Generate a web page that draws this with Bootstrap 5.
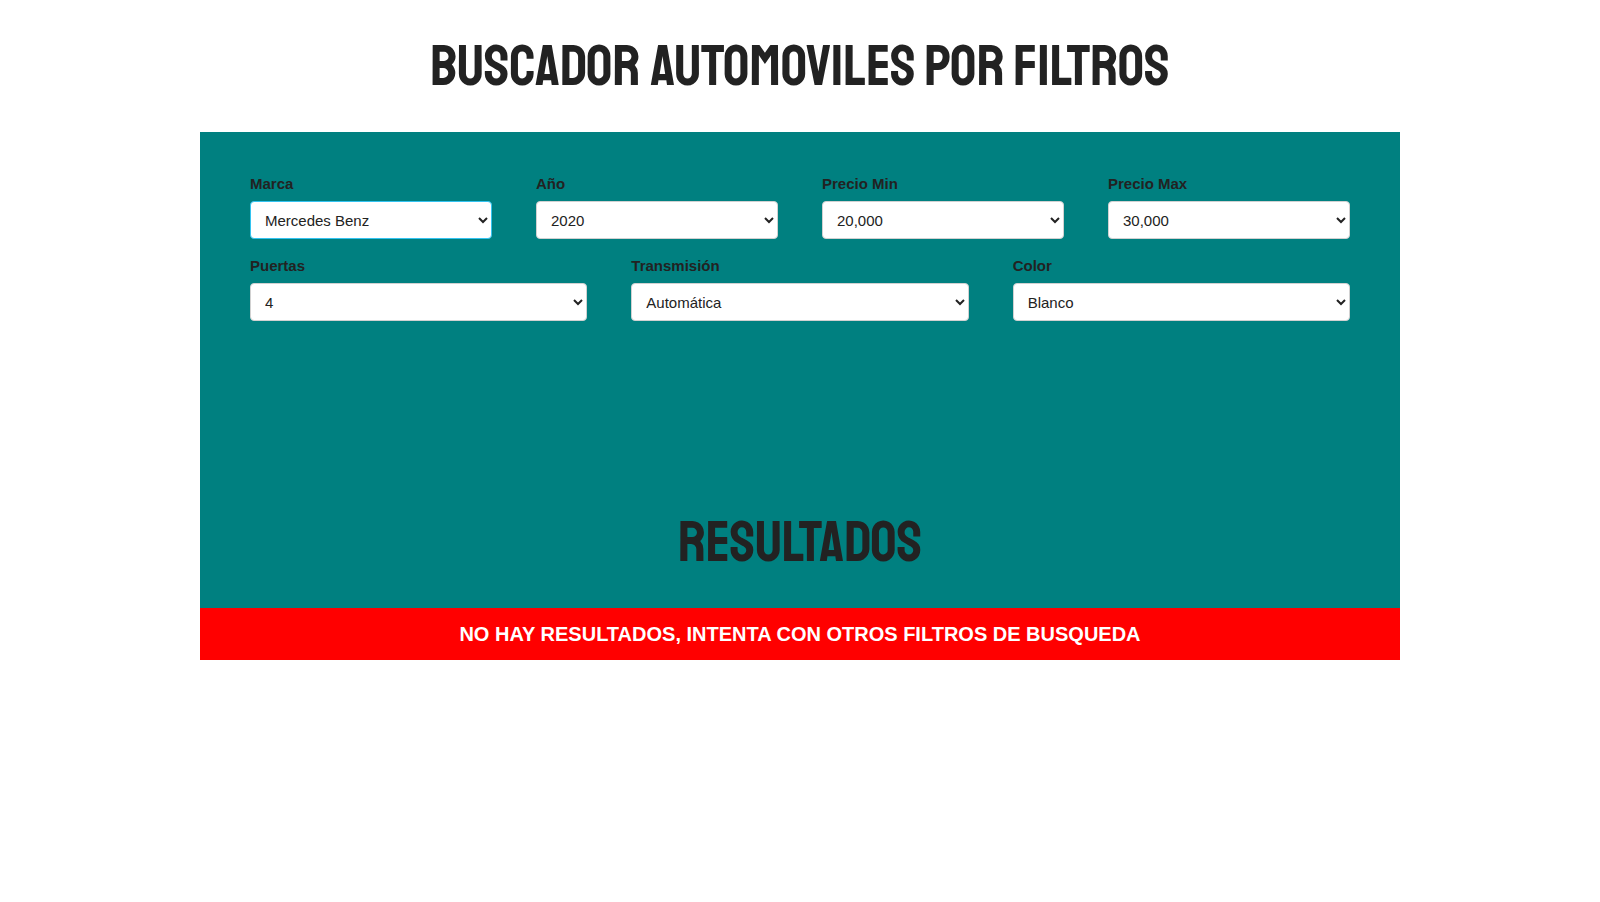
<!DOCTYPE html>
<html lang="es">
<head>
<meta charset="utf-8">
<meta name="viewport" content="width=device-width, initial-scale=1">
<title>Buscador Automoviles por Filtros</title>
<link href="https://cdn.jsdelivr.net/npm/bootstrap@5.3.0/dist/css/bootstrap.min.css" rel="stylesheet">
<style>
  body { font-family: "Liberation Sans", Arial, sans-serif; font-size: 15px; line-height: 24px; color: #222; background: #fff; }
  .page-wrap { max-width: 1200px; }
  .display-title { font-family: "Staatliches", "Noto Sans CJK JP", sans-serif; font-size: 58px; line-height: 72px; font-weight: 400; margin: 30px 0; color: #222; }
  .search-panel { background: #008080; }
  .filters { padding: 40px 50px; margin-bottom: 130px; }
  .filters .row { --bs-gutter-x: 44px; }
  .filters label { display: block; font-weight: 600; margin-bottom: 5px; }
  .filters .form-select {
    appearance: auto; background: #fff; height: 38px; padding: 6px 10px; margin-bottom: 15px;
    border: 1px solid #d1d1d1; border-radius: 4px; font-size: 15px; line-height: 24px; color: #222; box-shadow: none;
  }
  .filters .form-select.is-current, .filters .form-select:focus { border-color: #33c3f0; }
  .no-results { background: #f00; font-size: 20px; line-height: 32px; padding: 10px; }
</style>
</head>
<body>
<div class="container-fluid page-wrap p-0 overflow-hidden">
  <h1 class="display-title text-center text-uppercase">Buscador Automoviles por Filtros</h1>
  <main class="search-panel">
    <form class="filters">
      <div class="row">
        <div class="col-12 col-md-3">
          <label for="marca">Marca</label>
          <select class="form-select is-current" id="marca"><option>Mercedes Benz</option></select>
        </div>
        <div class="col-12 col-md-3">
          <label for="year">Año</label>
          <select class="form-select" id="year"><option>2020</option></select>
        </div>
        <div class="col-12 col-md-3">
          <label for="minimo">Precio Min</label>
          <select class="form-select" id="minimo"><option>20,000</option></select>
        </div>
        <div class="col-12 col-md-3">
          <label for="maximo">Precio Max</label>
          <select class="form-select" id="maximo"><option>30,000</option></select>
        </div>
      </div>
      <div class="row">
        <div class="col-12 col-md-4">
          <label for="puertas">Puertas</label>
          <select class="form-select" id="puertas"><option>4</option></select>
        </div>
        <div class="col-12 col-md-4">
          <label for="transmision">Transmisión</label>
          <select class="form-select" id="transmision"><option>Automática</option></select>
        </div>
        <div class="col-12 col-md-4">
          <label for="color">Color</label>
          <select class="form-select" id="color"><option>Blanco</option></select>
        </div>
      </div>
    </form>
    <h2 class="display-title text-center text-uppercase">Resultados</h2>
    <div class="no-results text-center text-uppercase text-white fw-bold" role="alert">No hay resultados, intenta con otros filtros de busqueda</div>
  </main>
</div>
<script src="https://cdn.jsdelivr.net/npm/bootstrap@5.3.0/dist/js/bootstrap.bundle.min.js"></script>
</body>
</html>
